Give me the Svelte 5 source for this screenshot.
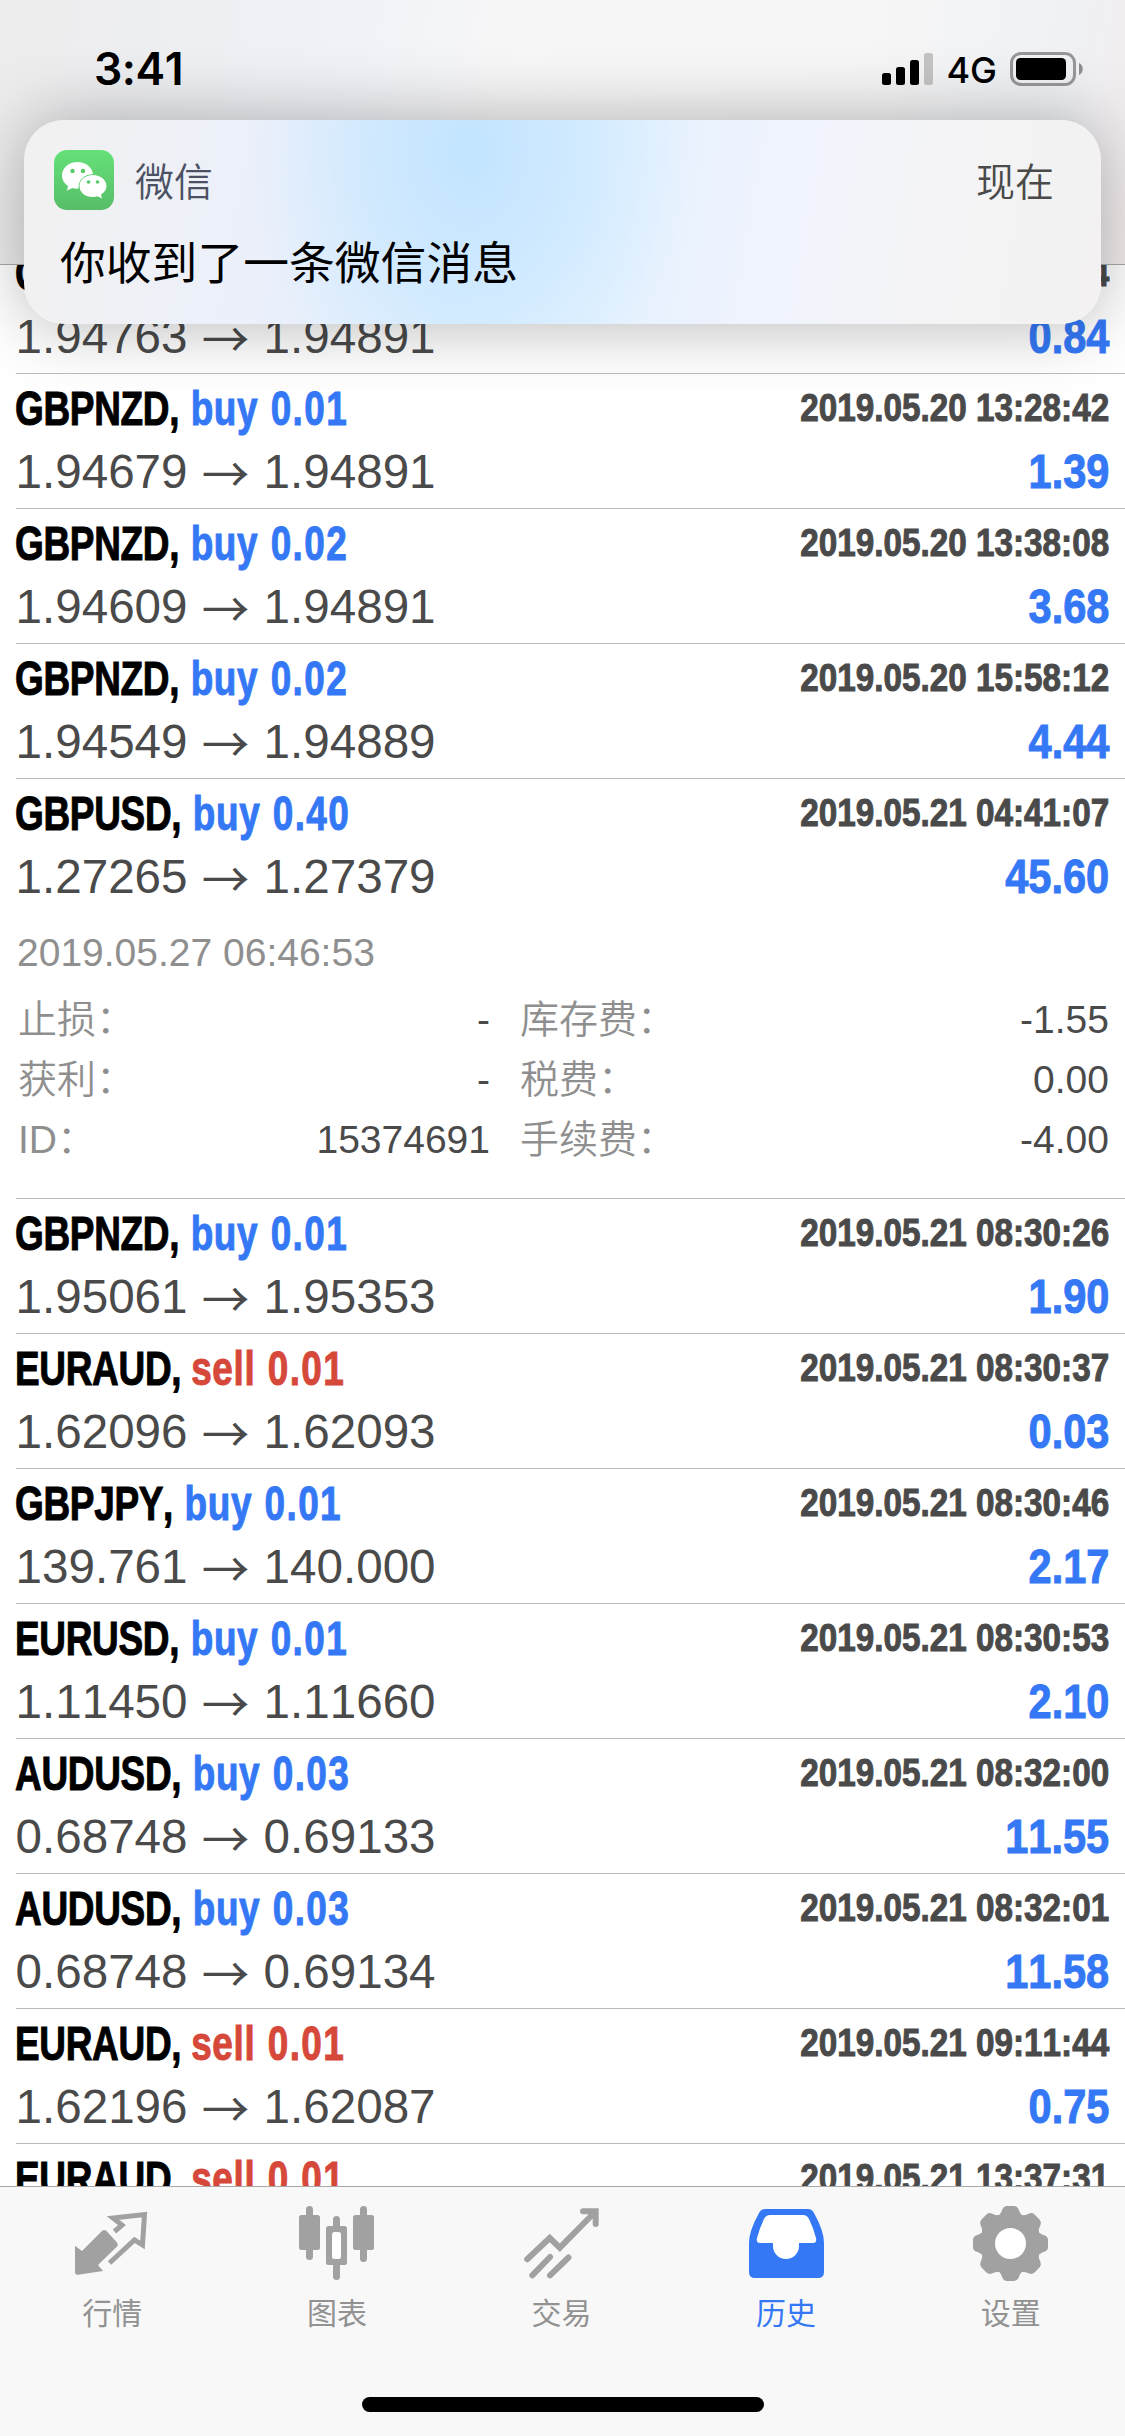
<script>
  const trades = [
    { symbol: 'GBPNZD', side: 'buy', lots: '0.01', time: '2019.05.20 13:26:14', open: '1.94763', close: '1.94891', profit: '0.84' },
    { symbol: 'GBPNZD', side: 'buy', lots: '0.01', time: '2019.05.20 13:28:42', open: '1.94679', close: '1.94891', profit: '1.39' },
    { symbol: 'GBPNZD', side: 'buy', lots: '0.02', time: '2019.05.20 13:38:08', open: '1.94609', close: '1.94891', profit: '3.68' },
    { symbol: 'GBPNZD', side: 'buy', lots: '0.02', time: '2019.05.20 15:58:12', open: '1.94549', close: '1.94889', profit: '4.44' },
    {
      symbol: 'GBPUSD', side: 'buy', lots: '0.40', time: '2019.05.21 04:41:07', open: '1.27265', close: '1.27379', profit: '45.60',
      details: {
        closed: '2019.05.27 06:46:53',
        fields: [
          ['止损：', '-'], ['库存费：', '-1.55'],
          ['获利：', '-'], ['税费：', '0.00'],
          ['ID：', '15374691'], ['手续费：', '-4.00'],
        ],
      },
    },
    { symbol: 'GBPNZD', side: 'buy', lots: '0.01', time: '2019.05.21 08:30:26', open: '1.95061', close: '1.95353', profit: '1.90' },
    { symbol: 'EURAUD', side: 'sell', lots: '0.01', time: '2019.05.21 08:30:37', open: '1.62096', close: '1.62093', profit: '0.03' },
    { symbol: 'GBPJPY', side: 'buy', lots: '0.01', time: '2019.05.21 08:30:46', open: '139.761', close: '140.000', profit: '2.17' },
    { symbol: 'EURUSD', side: 'buy', lots: '0.01', time: '2019.05.21 08:30:53', open: '1.11450', close: '1.11660', profit: '2.10' },
    { symbol: 'AUDUSD', side: 'buy', lots: '0.03', time: '2019.05.21 08:32:00', open: '0.68748', close: '0.69133', profit: '11.55' },
    { symbol: 'AUDUSD', side: 'buy', lots: '0.03', time: '2019.05.21 08:32:01', open: '0.68748', close: '0.69134', profit: '11.58' },
    { symbol: 'EURAUD', side: 'sell', lots: '0.01', time: '2019.05.21 09:11:44', open: '1.62196', close: '1.62087', profit: '0.75' },
    { symbol: 'EURAUD', side: 'sell', lots: '0.01', time: '2019.05.21 13:37:31', open: '1.62190', close: '1.62087', profit: '0.71' },
  ];

  const tabs = [
    { id: 'quotes', label: '行情' },
    { id: 'charts', label: '图表' },
    { id: 'trade', label: '交易' },
    { id: 'history', label: '历史' },
    { id: 'settings', label: '设置' },
  ];

  let active = $state('history');
</script>

<div class="screen">
  <header class="status">
    <span class="clock">3:41</span>
    <div class="indicators">
      <svg class="signal" viewBox="0 0 51 32">
        <rect x="0" y="20" width="9" height="12" rx="2.5" />
        <rect x="14" y="14" width="9" height="18" rx="2.5" />
        <rect x="28" y="7" width="9" height="25" rx="2.5" />
        <rect x="42" y="0" width="9" height="32" rx="2.5" fill="#c4c4c4" />
      </svg>
      <span class="network">4G</span>
      <svg class="battery" viewBox="0 0 74 34">
        <rect x="1.5" y="1.5" width="63" height="31" rx="9.5" fill="none" stroke="#979797" stroke-width="3" />
        <rect x="6" y="6" width="50" height="22" rx="4.5" />
        <path d="M69 11c5 2 5 10 0 12z" fill="#8e8e8e" />
      </svg>
    </div>
  </header>

  <main class="history">
    <ul>
      {#each trades as t}
        <li class:open={t.details}>
          <div class="line">
            <span class="title">{t.symbol}, <span class="side {t.side}">{t.side} <span class="lots">{t.lots}</span></span></span>
            <span class="time">{t.time}</span>
          </div>
          <div class="line">
            <span class="route">{t.open}<span class="arrow">→</span>{t.close}</span>
            <span class="profit">{t.profit}</span>
          </div>
          {#if t.details}
            <p class="closed">{t.details.closed}</p>
            <dl>
              {#each t.details.fields as [name, value]}
                <div class="field"><dt>{name}</dt><dd>{value}</dd></div>
              {/each}
            </dl>
          {/if}
        </li>
      {/each}
    </ul>
  </main>

  <nav>
    <div class="tabs">
      {#each tabs as tab}
        <button class:active={active === tab.id} onclick={() => (active = tab.id)}>
          <svg class="icon" viewBox="0 0 75 76" fill="currentColor">
            {#if tab.id === 'quotes'}
              <path d="M39.5 25.5L47 19L38 12L69.5 8.5L67.5 39L59.5 34L34.5 57" fill="none" stroke="currentColor" stroke-width="5" />
              <path d="M27 25Q29.3 23 31.5 25L42 36.5Q43.5 38.5 42 40.5L23 59L28 65L3 68.7Q0 69 0 66V39.7L7 45z" />
            {:else if tab.id === 'charts'}
              <rect x="7" y="0" width="7" height="54" rx="3.5" />
              <rect x="0" y="9" width="21" height="35" rx="2.5" />
              <rect x="34" y="10" width="7" height="64" rx="3.5" />
              <rect x="27" y="20" width="21" height="39" rx="2.5" />
              <rect x="33" y="26" width="9" height="27" rx="2.5" fill="#fff" />
              <rect x="61" y="0" width="7" height="56" rx="3.5" />
              <rect x="54" y="9" width="21" height="35" rx="2.5" />
            {:else if tab.id === 'trade'}
              <path
                d="M3.2 53.3L25.7 32L35.8 41.7L71 6M59 5.3H71.7V18M8.3 69.3L26 51M26 69.3L44.5 51.5"
                fill="none"
                stroke="currentColor"
                stroke-width="6"
                stroke-linecap="round"
              />
            {:else if tab.id === 'history'}
              <path d="M16 3H59Q63 3 65 7Q75 25 75 37V66Q75 72 69 72H6Q0 72 0 66V37Q0 25 10 7Q12 3 16 3z" />
              <path fill="#fff" d="M21 9H54Q58 9 60 13Q64 21 67 32Q68 37 64 37H50V40A13 13 0 0 1 24 40V37H11Q7 37 8 32Q11 21 15 13Q17 9 21 9z" />
            {:else}
              <circle cx="37.5" cy="37.5" r="30.5" />
              {#each [0, 45, 90, 135, 180, 225, 270, 315] as angle}
                <path transform="rotate({angle} 37.5 37.5)" d="M25 10Q28 8 29.5 3Q31 0 34 0H41Q44 0 45.5 3Q47 8 50 10z" />
              {/each}
              <circle cx="37.5" cy="37.5" r="15.5" fill="#fff" />
            {/if}
          </svg>
          {tab.label}
        </button>
      {/each}
    </div>
    <div class="home"></div>
  </nav>

  <section class="banner">
    <div class="banner-head">
      <svg class="app-icon" viewBox="0 0 60 60">
        <defs>
          <linearGradient id="green" x2="0" y2="1">
            <stop stop-color="#65e178" />
            <stop offset="1" stop-color="#57bd68" />
          </linearGradient>
        </defs>
        <rect width="60" height="60" rx="13" fill="url(#green)" />
        <path fill="#fff" d="M23.5 12C14.5 12 8 18 8 25.5C8 30 10.5 33.5 14 36L13 40.5L18.5 38Q21 39 24.5 38.5C24 30 30 24.5 39 24C38 17 32 12 23.5 12z" />
        <path fill="#fff" d="M39 25C31 25 25.5 30 25.5 36C25.5 42.5 31 47 39 47Q41.5 47 43.5 46.3L48 48.5L47 44.5C50.5 42.5 52.5 39.5 52.5 36C52.5 30 46.5 25 39 25z" />
        <g fill="#57c966">
          <circle cx="18.5" cy="21" r="2.2" />
          <circle cx="29" cy="21" r="2.2" />
          <circle cx="34.5" cy="32" r="1.8" />
          <circle cx="43.5" cy="32" r="1.8" />
        </g>
      </svg>
      <span class="app-name">微信</span>
      <span class="when">现在</span>
    </div>
    <p>你收到了一条微信消息</p>
  </section>
</div>

<style>
  :global(body) {
    margin: 0;
    background: #fff;
  }
  .screen {
    position: relative;
    display: flex;
    flex-direction: column;
    width: 1125px;
    height: 2436px;
    overflow: hidden;
    background: #fff;
    font-family: 'Liberation Sans', 'Noto Sans CJK SC', sans-serif;
    font-kerning: none;
    color: #4a4a4a;
  }

  /* status bar */
  .status {
    box-sizing: border-box;
    flex: 0 0 265px;
    display: flex;
    justify-content: space-between;
    align-items: flex-start;
    padding: 52px 41px 0 94px;
    border-bottom: 1px solid #a9a9a9;
    background: linear-gradient(100deg, #ececec, #f0f2f8 30%, #f7f7f7 45%, #f6f6f6 75%, #eff1f5 92%, #f3ecec);
    font-family: Inter, sans-serif;
    color: #000;
  }
  .clock {
    font-size: 44.5px;
    line-height: 34px;
    font-weight: 600;
    letter-spacing: -0.5px;
  }
  .indicators {
    display: flex;
    align-items: center;
    height: 34px;
  }
  .signal {
    width: 51px;
    height: 32px;
  }
  .network {
    margin: 2px 13px 0;
    font-size: 36px;
    line-height: 34px;
    font-weight: 450;
  }
  .battery {
    width: 74px;
    height: 34px;
  }

  /* trade list */
  .history {
    flex: 1;
    min-height: 0;
    overflow: hidden;
  }
  ul {
    list-style: none;
    margin: -26px 0 0 16px;
    padding: 0;
  }
  li {
    box-sizing: border-box;
    height: 135px;
    padding: 8px 16px 0 0;
    border-bottom: 1px solid #bcbcc0;
  }
  li.open {
    height: 420px;
  }
  .line {
    display: flex;
    justify-content: space-between;
    align-items: baseline;
    height: 63px;
    line-height: 54px;
    white-space: nowrap;
  }
  .title,
  .profit,
  .time {
    font-weight: 700;
    -webkit-text-stroke: 1px;
  }
  /* condensed look: the face is squeezed towards the edge it is aligned to */
  .title {
    margin-left: -1px;
    font-size: 48px;
    letter-spacing: -0.4px;
    color: #000;
    transform: scaleX(0.77);
    transform-origin: left;
  }
  .side {
    margin-left: 2px;
    letter-spacing: 0.8px;
  }
  .side.sell {
    margin-left: 0;
  }
  .lots {
    margin-left: 2px;
    letter-spacing: 1.8px;
  }
  .buy,
  .profit {
    color: #3478f6;
  }
  .sell {
    color: #d6483a;
  }
  .time {
    font-size: 39px;
    transform: translateY(-4px) scaleX(0.853);
    transform-origin: right;
  }
  .route {
    display: flex;
    margin-left: -0.5px;
    font-size: 47.6px;
  }
  .arrow {
    width: 76px;
    text-align: center;
    font-family: 'Noto Sans CJK SC', sans-serif;
  }
  .profit {
    font-size: 48px;
    transform: scaleX(0.865);
    transform-origin: right;
  }

  .closed {
    margin: 16px 0 0 1px;
    font-size: 39px;
    line-height: 48px;
    color: #8f8f8f;
  }
  dl {
    display: grid;
    grid-template-columns: 473px 590px;
    column-gap: 29px;
    margin: 13px 0 0 1px;
    font-size: 39px;
    line-height: 60px;
  }
  .field {
    display: flex;
    justify-content: space-between;
    height: 60px;
  }
  dt {
    padding-left: 1px;
    font-weight: 350;
    color: #8f8f8f;
  }
  dd {
    margin: 0;
  }

  /* tab bar */
  nav {
    box-sizing: border-box;
    flex: 0 0 250px;
    display: flex;
    flex-direction: column;
    align-items: center;
    border-top: 1px solid #a9a9a9;
    background: #f8f8f8;
  }
  .tabs {
    display: flex;
    width: 100%;
    height: 210px;
    padding-right: 2px;
    box-sizing: border-box;
  }
  button {
    flex: 1;
    display: flex;
    flex-direction: column;
    align-items: center;
    gap: 7px;
    padding: 19px 0 0;
    border: none;
    background: none;
    font-family: 'Noto Sans CJK SC', sans-serif;
    font-size: 30px;
    line-height: 44px;
    color: #929292;
  }
  button.active {
    color: #3478f6;
  }
  .icon {
    width: 75px;
    height: 76px;
    color: #a1a1a1;
  }
  .active .icon {
    color: #3478f6;
  }
  .home {
    width: 402px;
    height: 15px;
    border-radius: 8px;
    background: #000;
  }

  /* notification over the page */
  .banner {
    position: absolute;
    top: 120px;
    left: 24px;
    box-sizing: border-box;
    width: 1077px;
    height: 204px;
    padding: 30px 47px 0 30px;
    border-radius: 40px;
    background:
      radial-gradient(ellipse 220px 280px at 445px 30px, #c2e4ff, rgba(194, 228, 255, 0.6) 45%, rgba(194, 228, 255, 0)),
      linear-gradient(100deg, #f1f1f2 4%, #ebf0fb 24%, #e0f0ff 42%, #e4f2ff 54%, #eff3fd 68%, #f4f4f6 84%, #f3f1f1);
    box-shadow: 0 0 70px rgba(0, 0, 0, 0.3);
    font-family: 'Noto Sans CJK SC', sans-serif;
  }
  .banner-head {
    display: flex;
    align-items: center;
    height: 60px;
    font-size: 39px;
    line-height: 56px;
    font-weight: 350;
  }
  .banner-head span {
    padding-bottom: 3px;
  }
  .app-icon {
    width: 60px;
    height: 60px;
  }
  .app-name {
    flex: 1;
    margin-left: 21px;
    color: #4b5163;
  }
  .banner p {
    margin: 17px 0 0 6px;
    font-size: 45.8px;
    line-height: 66px;
    color: #000;
  }
</style>
